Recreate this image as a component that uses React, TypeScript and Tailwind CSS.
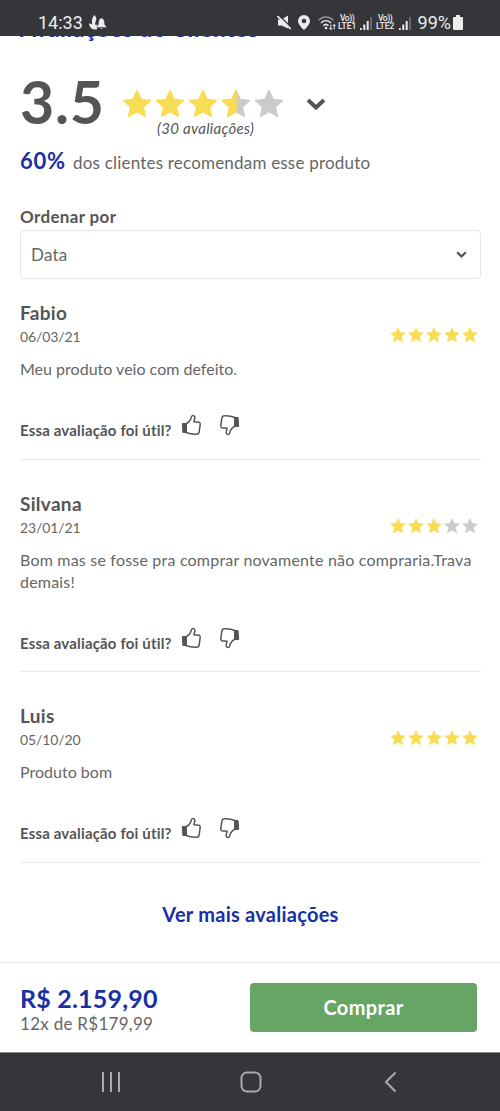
import clsx from 'clsx';

interface Review {
    author: string;
    date: string;
    rating: number;
    comment: string;
}

const reviews: Review[] = [
    { author: 'Fabio', date: '06/03/21', rating: 5, comment: 'Meu produto veio com defeito.' },
    { author: 'Silvana', date: '23/01/21', rating: 3, comment: 'Bom mas se fosse pra comprar novamente não compraria.Trava demais!' },
    { author: 'Luis', date: '05/10/20', rating: 5, comment: 'Produto bom' },
];

const STAR_PATH = 'M12 1.2l3.2 7.1 7.6.8-5.7 5.2 1.6 7.6L12 18.1l-6.7 3.8 1.6-7.6L1.2 9.1l7.6-.8z';

function Star({ fill, className }: { fill: number; className: string }) {
    const color = fill >= 1 ? '#f9dc55' : '#cbcbcb';

    return (
        <svg viewBox="0 0 24 24" className={className}>
            <path d={STAR_PATH} fill={color} stroke={color} strokeWidth="1.2" strokeLinejoin="round" />
            {fill > 0 && fill < 1 && (
                <path d="M12 1.2L8.8 8.3l-7.6.8 5.7 5.2-1.6 7.6 6.7-3.8z" fill="#f9dc55" stroke="#f9dc55" strokeWidth="1.2" strokeLinejoin="round" />
            )}
        </svg>
    );
}

function Stars({ rating, className, starClass }: { rating: number; className: string; starClass: string }) {
    return (
        <div className={clsx('flex', className)}>
            {[0, 1, 2, 3, 4].map((i) => (
                <Star key={i} fill={Math.max(0, Math.min(1, rating - i))} className={starClass} />
            ))}
        </div>
    );
}

function Thumb({ down = false }: { down?: boolean }) {
    return (
        <svg viewBox="0 0 20 22" className={clsx('h-[22px] w-5', down && 'rotate-180')} fill="none">
            <path d="M1.300 9.500h3.900v9H1.900z" fill="#555" stroke="#555" strokeWidth="1" strokeLinejoin="round" />
            <path
                d="M5.200 9.700c1.700-.7 3.300-2.300 4.400-4.300.6-1.200.4-3.400 1.700-3.800 1.500-.4 2.700.8 2.500 2.500-.1 1.500-.9 2.700-.9 3.700 1.700.2 4.300 0 5.500.5 1 .5.9 1.600.7 2.700l-.9 6.600c-.3 1.700-1 2.600-2.700 2.600-3.500.1-7.300-.3-10.300-1.700z"
                stroke="#555"
                strokeWidth="1.500"
                strokeLinejoin="round"
            />
        </svg>
    );
}

function Chevron({ className }: { className: string }) {
    return (
        <svg viewBox="0 0 20 12" className={className} fill="none">
            <path d="M2 2l8 7.500L18 2" stroke="#555" strokeWidth="4" />
        </svg>
    );
}

function Signal() {
    return (
        <svg viewBox="0 0 12 13" className="h-[13px] w-3" fill="#ececee">
            <path d="M0 11h1.800v2H0zM3.300 7.500h2V13h-2zM6.700 4h2v9h-2z" />
            <path d="M10.200 0h1.600v13h-1.600z" opacity=".35" />
        </svg>
    );
}

function Volte({ label }: { label: string }) {
    return (
        <div className="flex w-[19px] flex-col items-center font-['Roboto'] text-[8.5px] leading-2 font-medium text-[#ececee]">
            <span className="tracking-[-0.5px]">Vo))</span>
            <span className="whitespace-nowrap">{label}</span>
        </div>
    );
}

function StatusBar() {
    return (
        <div className="flex h-9 shrink-0 items-end bg-[#35363a] pr-[37px] pb-[3px] pl-[38px] font-['Roboto'] text-[#ececee]">
            <span className="text-[18px] leading-5">14:33</span>
            <svg viewBox="0 0 18 15" className="mb-[3px] ml-1.5 h-[15px] w-[18px]" fill="#ececee">
                <path d="M5.300 0c2 1.800 2.400 4 1.600 6L5.800 9.500 8.500 10l-.5 4.300C3.500 15.500.3 12.500 0 8.300l3.300 1.200C2.500 6 3 2.500 5.300 0z" />
                <path
                    d="M12.500 3c2.200.6 2.900 2.200 3 5 .1 1.700.7 2.500 1.800 3.400v1H7.700v-1c1.100-.9 1.700-1.700 1.800-3.400.1-2.800.8-4.400 3-5zM11.200 13h2.600c-.2 1.600-2.400 1.600-2.600 0z"
                    stroke="#35363a"
                    strokeWidth=".4"
                />
            </svg>
            <div className="ml-auto flex items-end">
                <svg viewBox="0 0 14 15" className="mb-[3px] h-[15px] w-[14px]" fill="#ececee">
                    <path d="M1 4.500h3.500L11 .5v13L4.500 10.500H1z" />
                    <path d="M1.500 0l13 12.500" stroke="#35363a" strokeWidth="1.600" />
                    <path d="M.5 1l13 12.800" stroke="#ececee" strokeWidth="1.700" />
                </svg>
                <svg viewBox="0 0 12 15" className="mb-[3px] ml-[7px] h-[15px] w-3" fill="#ececee">
                    <path fillRule="evenodd" d="M6 0a6 6 0 0 1 6 6c0 4-6 9-6 9S0 10 0 6a6 6 0 0 1 6-6zm0 3.700a2.300 2.300 0 1 0 0 4.600 2.300 2.300 0 0 0 0-4.600z" />
                </svg>
                <svg viewBox="0 0 18 14" className="mb-[3px] ml-[8px] h-[14px] w-[18px]" fill="none" stroke="#ececee" strokeWidth="1.500">
                    <path d="M.6 4.200c4.300-4.200 10.600-4.200 14.800 0" opacity=".5" />
                    <path d="M3 7c3-2.900 7-2.900 10 0M5.300 9.600c1.700-1.600 3.600-1.600 5.200 0" />
                    <circle cx="8" cy="12" r="1.300" fill="#ececee" stroke="none" />
                    <path d="M12.800 8.500v5M11.300 12l1.500 1.500 1.500-1.500M16.200 13.500v-5M14.900 10l1.300-1.500L17.500 10" strokeWidth="1" />
                </svg>
                <div className="mb-[3px] ml-[2px] flex items-end">
                    <Volte label="LTE1" />
                    <span className="mr-1 ml-[3px]">
                        <Signal />
                    </span>
                    <Volte label="LTE2" />
                    <span className="ml-1">
                        <Signal />
                    </span>
                </div>
                <span className="ml-[7px] text-[18px] leading-5">99%</span>
                <svg viewBox="0 0 10 15" className="mb-[3px] ml-[2px] h-[15px] w-[10px]" fill="#ececee">
                    <path d="M3 0h4v2h2a1 1 0 0 1 1 1v11a1 1 0 0 1-1 1H1a1 1 0 0 1-1-1V3a1 1 0 0 1 1-1h2z" />
                </svg>
            </div>
        </div>
    );
}

function ReviewItem({ review, first }: { review: Review; first: boolean }) {
    const isLong = review.comment.length > 50;

    return (
        <div className={clsx('border-b border-[#e9e9e9] pb-[21.5px]', first ? 'pt-[22px]' : 'pt-8')}>
            <div className="flex items-end justify-between">
                <div>
                    <h3 className="text-[19px] leading-6 font-bold tracking-[0.3px]">{review.author}</h3>
                    <p className="mt-0.5 text-[14px] leading-5 tracking-[-0.1px] text-[#666]">{review.date}</p>
                </div>
                <Stars rating={review.rating} className="mr-[3px] mb-[4px] gap-[2px]" starClass="size-4" />
            </div>
            <p className={clsx('mt-[11px] text-[16px] leading-[22px] text-[#666]', isLong ? 'tracking-[0.2px]' : 'tracking-[0.01px]')}>{review.comment}</p>
            <div className="mt-[33px] flex h-6 items-start">
                <span className="mt-[7px] w-[161px] text-[15px] leading-5 font-bold tracking-[0.16px] whitespace-nowrap">Essa avaliação foi útil?</span>
                <span className="mt-px flex gap-[19px]">
                    <Thumb />
                    <Thumb down />
                </span>
            </div>
        </div>
    );
}

export default function App() {
    return (
        <div className="flex h-[1111px] w-[500px] flex-col overflow-hidden bg-white font-['Lato',sans-serif] text-[#555]">
            <StatusBar />

            {/* Reviews */}
            <main className="flex-1 overflow-hidden pr-[19px] pl-5">
                <h2 className="-mt-[23px] text-[23px] leading-[30px] font-bold tracking-[0.5px] text-[#1930a5]">Avaliações de Clientes</h2>

                <div className="mt-[29px] flex h-[74px] items-start">
                    <div className="w-[102px] text-[59px] leading-[60px] font-bold tracking-[0.8px]">3.5</div>
                    <div className="mt-[17px]">
                        <Stars rating={3.5} className="gap-[3px]" starClass="size-[30px]" />
                        <p className="ml-[35px] text-[15px] leading-[18px] tracking-[0.3px] italic">(30 avaliações)</p>
                    </div>
                    <Chevron className="mt-[26px] ml-[22px] h-3 w-5" />
                </div>

                <p className="flex items-baseline leading-[30px]">
                    <span className="w-[53px] text-[22px] font-bold tracking-[0.7px] text-[#1930a5]">60%</span>
                    <span className="text-[17px] tracking-[0.2px] text-[#666]">dos clientes recomendam esse produto</span>
                </p>

                <label className="mt-[29px] block text-[17px] leading-5 font-bold tracking-[0.35px]">Ordenar por</label>
                <div className="mt-[3px] flex h-[49px] items-center justify-between rounded-[4px] border border-[#e6e6e6] pr-[13px] pl-[10px]">
                    <span className="text-[17px] tracking-[0.2px] text-[#666]">Data</span>
                    <Chevron className="h-[7px] w-[11px]" />
                </div>

                {reviews.map((review, i) => (
                    <ReviewItem key={review.author} review={review} first={i === 0} />
                ))}

                <div className="mt-[37px] text-center text-[20px] leading-7 font-bold tracking-[0.25px] text-[#1930a5]">Ver mais avaliações</div>
            </main>

            {/* Buy bar */}
            <div className="flex h-[90px] shrink-0 items-start justify-between border-t border-[#e4e4e4] pt-5 pr-[23px] pl-[20px]">
                <div>
                    <div className="mt-px text-[25px] leading-7 font-bold tracking-[0.2px] text-[#1930a5]">R$ 2.159,90</div>
                    <div className="mt-0.5 text-[17px] leading-5 tracking-[0.28px] text-[#666]">12x de R$179,99</div>
                </div>
                <button className="h-[49px] w-[227px] rounded-[4px] bg-[#66a564] pb-[2px] text-[20px] font-bold tracking-[0.35px] text-white">Comprar</button>
            </div>

            {/* Android navigation */}
            <nav className="flex h-[59px] shrink-0 items-center border-t border-[#8a8b8d] bg-[#35363a] pl-[101px]">
                <svg viewBox="0 0 20 22" className="h-[22px] w-5" fill="none" stroke="#a9aaac" strokeWidth="2">
                    <path d="M2 1v20M10 1v20M18 1v20" />
                </svg>
                <svg viewBox="0 0 22 22" className="ml-[119px] size-[22px]" fill="none" stroke="#a9aaac" strokeWidth="2">
                    <rect x="1.500" y="1.500" width="19" height="19" rx="5.500" />
                </svg>
                <svg viewBox="0 0 13 22" className="ml-[122px] h-[22px] w-[13px]" fill="none" stroke="#a9aaac" strokeWidth="2">
                    <path d="M11.500 1.500L2 11l9.500 9.500" />
                </svg>
            </nav>
        </div>
    );
}
